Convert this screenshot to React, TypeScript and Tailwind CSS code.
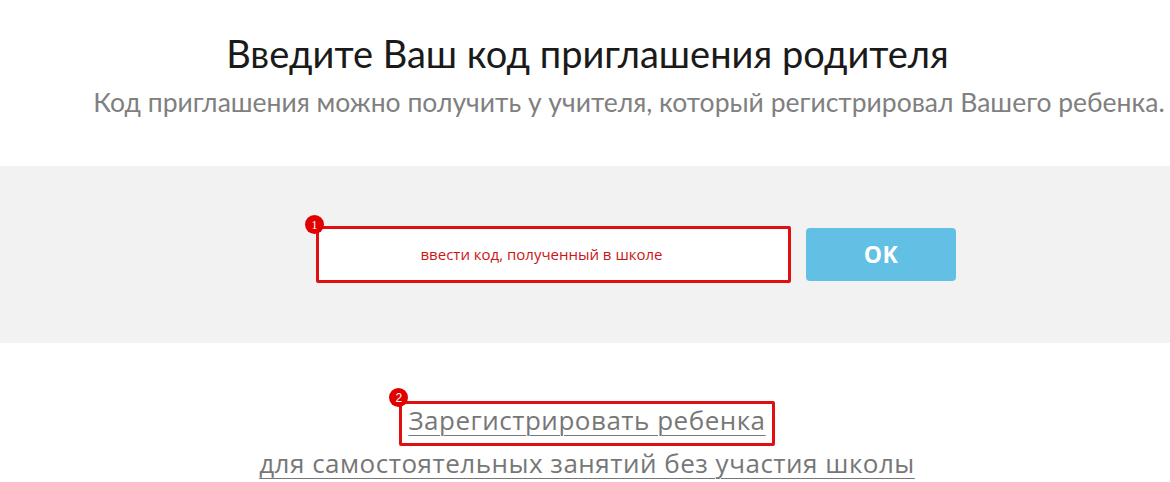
export default function App() {
  return (
    <div className="w-[1170px] h-[482px] bg-white overflow-hidden" style={{ fontFamily: "Lato, 'Noto Sans', sans-serif" }}>
      <div className="flex flex-col items-center pt-[30px]">
        <h1 className="text-[38px] leading-[46px] text-[#1a1a1a] ml-[5px] whitespace-nowrap">Введите Ваш код приглашения родителя</h1>
        <p className="text-[26.5px] leading-[32px] text-[#808080] mt-[10px] ml-[88px] whitespace-nowrap">Код приглашения можно получить у учителя, который регистрировал Вашего ребенка.</p>
      </div>
      <div className="mt-[48px] h-[177px] bg-[#f2f2f2] flex items-center pl-[316px] gap-[15px]">
        <div className="relative">
          <div className="w-[475px] h-[57px] bg-white border-[3px] border-[#e01010] rounded-[2px] flex items-center justify-center pr-[24px] text-[15px] text-[#cc1414]" style={{ fontFamily: "'Open Sans', sans-serif" }}>
            ввести код, полученный в школе
          </div>
          <div className="absolute left-[-11px] top-[-11px] w-[19px] h-[19px] rounded-full bg-[#e00000] text-white text-[12px] flex items-center justify-center" style={{ fontFamily: "'Liberation Serif', serif" }}>1</div>
        </div>
        <button className="w-[150px] h-[53px] rounded-[4px] bg-[#62c0e4] text-white text-[23px] font-bold tracking-wide" style={{ fontFamily: "'Open Sans', sans-serif" }}>OK</button>
      </div>
      <div className="flex flex-col items-center pt-[58px] ml-[4px]" style={{ fontFamily: "'Open Sans', sans-serif" }}>
        <div className="relative">
          <div className="border-[3px] border-[#e01010] rounded-[2px] px-[6px] pb-[7px]">
            <span className="block text-[26px] leading-[32px] tracking-[0.5px] text-[#777777] underline decoration-1 underline-offset-[5px]">Зарегистрировать ребенка</span>
          </div>
          <div className="absolute left-[-10px] top-[-13px] w-[19px] h-[19px] rounded-full bg-[#e00000] text-white text-[12px] flex items-center justify-center" style={{ fontFamily: "'Liberation Sans', sans-serif" }}>2</div>
        </div>
        <span className="text-[26px] leading-[32px] tracking-[0.5px] text-[#777777] underline decoration-1 underline-offset-[5px] mt-[1px] whitespace-nowrap">для самостоятельных занятий без участия школы</span>
      </div>
    </div>
  );
}
